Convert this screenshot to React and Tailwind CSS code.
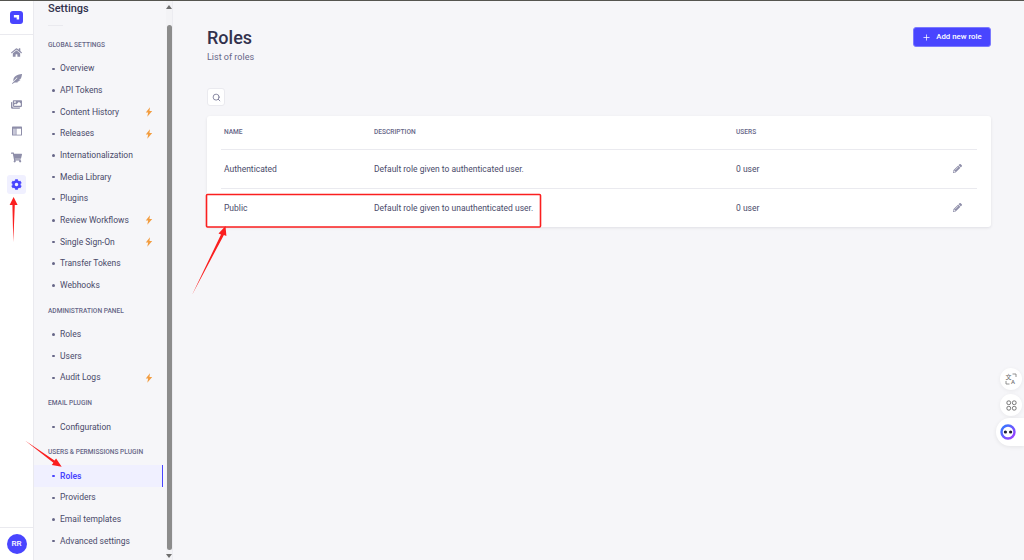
import { FaHome, FaFeatherAlt, FaImages, FaShoppingCart, FaCog, FaPencilAlt } from "react-icons/fa";
import { Plus, Search } from "lucide-react";

const sections = [
  {
    title: "GLOBAL SETTINGS",
    items: [
      { label: "Overview" },
      { label: "API Tokens" },
      { label: "Content History", bolt: true },
      { label: "Releases", bolt: true },
      { label: "Internationalization" },
      { label: "Media Library" },
      { label: "Plugins" },
      { label: "Review Workflows", bolt: true },
      { label: "Single Sign-On", bolt: true },
      { label: "Transfer Tokens" },
      { label: "Webhooks" },
    ],
  },
  {
    title: "ADMINISTRATION PANEL",
    items: [{ label: "Roles" }, { label: "Users" }, { label: "Audit Logs", bolt: true }],
  },
  { title: "EMAIL PLUGIN", items: [{ label: "Configuration" }] },
  {
    title: "USERS & PERMISSIONS PLUGIN",
    items: [
      { label: "Roles", active: true },
      { label: "Providers" },
      { label: "Email templates" },
      { label: "Advanced settings" },
    ],
  },
];

const roles = [
  { name: "Authenticated", description: "Default role given to authenticated user." },
  { name: "Public", description: "Default role given to unauthenticated user." },
];

function Bolt() {
  return (
    <svg viewBox="0 0 10 12" className="w-[8px] h-[10px]" fill="#f29d41">
      <path d="M6.2 0 1 6.6h2.9L2.9 12 9 4.9H5.6z" />
    </svg>
  );
}

function LayoutIcon() {
  return (
    <svg viewBox="0 0 12 12" className="w-[10px] h-[10px]">
      <rect x="0" y="0.5" width="12" height="11" rx="0.8" fill="#8e8ea9" />
      <rect x="1.2" y="3.2" width="3.4" height="7.2" fill="#c8c8d8" />
      <rect x="5.4" y="3.2" width="5.4" height="7.2" fill="#ffffff" />
    </svg>
  );
}

function NavRail() {
  const iconClass = "text-[#8e8ea9]";
  return (
    <div className="w-[34px] shrink-0 bg-white border-r border-[#eaeaef] flex flex-col items-center">
      <div className="h-[34px] w-full flex items-center justify-center border-b border-[#eaeaef] shrink-0">
        <div className="w-[13px] h-[13px] rounded-[3px] bg-[#4945ff] flex items-center justify-center">
          <svg viewBox="0 0 8 8" className="w-[7px] h-[7px]" fill="#ffffff">
            <path d="M1 1.2h6v5H4.2V4H1z" />
          </svg>
        </div>
      </div>
      <div className="flex flex-col items-center mt-[4px] w-full">
        <div className="h-[26.4px] flex items-center"><FaHome size={11} className={iconClass} /></div>
        <div className="h-[26.4px] flex items-center"><FaFeatherAlt size={10} className={iconClass} /></div>
        <div className="h-[26.4px] flex items-center"><FaImages size={11} className={iconClass} /></div>
        <div className="h-[26.4px] flex items-center"><LayoutIcon /></div>
        <div className="h-[26.4px] flex items-center"><FaShoppingCart size={11} className={iconClass} /></div>
        <div className="w-[19px] h-[19px] mt-[4px] rounded-[3px] bg-[#f0f0ff] flex items-center justify-center">
          <FaCog size={11} className="text-[#4945ff]" />
        </div>
      </div>
      <div className="mt-auto w-full border-t border-[#eaeaef] h-[33px] flex items-center justify-center shrink-0">
        <div className="w-[20px] h-[20px] rounded-full bg-[#4945ff] text-white text-[8px] font-medium flex items-center justify-center">
          RR
        </div>
      </div>
    </div>
  );
}

function SettingsNav() {
  return (
    <div className="w-[132px] shrink-0 h-full overflow-hidden">
      <h2 className="text-[11px] leading-[16px] font-medium text-[#32324d] ml-[14px] mb-[8px]">Settings</h2>
      <div className="w-[15px] h-px bg-[#eaeaef] ml-[14px] mb-[12px]" />
      {sections.map((section) => (
        <div key={section.title} className="mb-[7.5px]">
          <div className="h-[14px] ml-[14px] mb-[6px] text-[6.6px] leading-[14px] font-medium text-[#666687] whitespace-nowrap">
            {section.title}
          </div>
          {section.items.map((item, index) => (
            <div
              key={index}
              className={`h-[21.67px] flex items-center pl-[18px] pr-[10px] mr-[3px] ${
                item.active ? "bg-[#f0f0ff] border-r border-[#4945ff] text-[#4945ff] font-semibold" : "text-[#4a4a6a]"
              }`}
            >
              <span className={`w-[2.5px] h-[2.5px] rounded-full mr-[5.5px] ${item.active ? "bg-[#4945ff]" : "bg-[#666687]"}`} />
              <span className="text-[8.5px] whitespace-nowrap flex-1">{item.label}</span>
              {item.bolt && <Bolt />}
            </div>
          ))}
        </div>
      ))}
    </div>
  );
}

function Scrollbar() {
  return (
    <div className="w-[7px] shrink-0 h-full flex flex-col items-center bg-[#f3f3f6] border-r border-[#ececf1]">
      <div className="w-0 h-0 mt-[4px] border-x-[3px] border-x-transparent border-b-[4px] border-b-[#6e6e6e]" />
      <div className="w-[5px] flex-1 mt-[16px] mb-[4px] rounded-full bg-[#8c8c8c]" />
      <div className="w-0 h-0 mb-[2px] border-x-[3px] border-x-transparent border-t-[4px] border-t-[#6e6e6e]" />
    </div>
  );
}

function RolesTable() {
  return (
    <div className="bg-white rounded-[3px] shadow-[0_1px_3px_rgba(33,33,52,0.1)] px-[14px]">
      <div className="grid grid-cols-[150px_362px_1fr_24px] items-center h-[34px] border-b border-[#eaeaef] pl-[3px] text-[6.6px] font-medium text-[#666687]">
        <span>NAME</span>
        <span>DESCRIPTION</span>
        <span>USERS</span>
        <span />
      </div>
      {roles.map((role, index) => (
        <div
          key={role.name}
          className={`grid grid-cols-[150px_362px_1fr_24px] items-center h-[38.5px] pl-[3px] pt-[2px] text-[8.5px] text-[#4a4a6a] ${
            index === 0 ? "border-b border-[#eaeaef]" : ""
          }`}
        >
          <span>{role.name}</span>
          <span>{role.description}</span>
          <span>0 user</span>
          <FaPencilAlt size={9} className="text-[#8e8ea9] -mt-[3px]" />
        </div>
      ))}
    </div>
  );
}

function Annotations() {
  return (
    <svg className="absolute inset-0 pointer-events-none" width="1024" height="560" viewBox="0 0 1024 560">
      <rect x="206.5" y="193.5" width="334" height="32.5" rx="1" fill="none" stroke="#fb1f1f" strokeWidth="1.6" />
      <path d="M13.3 241 12.4 204H9.6l4-8 4 8h-2.8z" fill="#fb1f1f" />
      <path d="M25 439.5 54.5 459.6l1.6-2.2 5.6 8.3-9.9-1.7 1.6-2.2z" fill="#fb1f1f" />
      <path d="M192 294 221 233.5l-2.5-1.1L225.5 225l.9 10-2.5-1.1z" fill="#fb1f1f" />
    </svg>
  );
}

function FloatingButtons() {
  return (
    <div className="absolute right-0 top-[367px] flex flex-col items-end gap-[4px]">
      <div className="relative w-[22px] h-[22px] mr-[2px] rounded-full bg-white shadow-[0_1px_4px_rgba(0,0,0,0.06)] flex items-center justify-center">
        <span className="text-[6px] leading-[5.5px] font-medium text-[#777777] w-[11px]">
          文<br />
          <span className="pl-[5.5px]">A</span>
        </span>
        <svg viewBox="0 0 12 12" className="absolute left-[5px] top-[5px] w-[12px] h-[12px]" fill="none" stroke="#777777" strokeWidth="0.8">
          <path d="M7.5 1H11v3M1 8v3h3.5" />
        </svg>
      </div>
      <div className="w-[22px] h-[22px] mr-[2px] rounded-full bg-white shadow-[0_1px_4px_rgba(0,0,0,0.06)] flex items-center justify-center">
        <svg viewBox="0 0 12 12" className="w-[11px] h-[11px]" fill="none" stroke="#666666" strokeWidth="1">
          <rect x="1" y="1" width="4" height="4" rx="1.6" />
          <rect x="7" y="1" width="4" height="4" rx="1.6" />
          <rect x="1" y="7" width="4" height="4" rx="1.6" />
          <rect x="7" y="7" width="4" height="4" rx="1.6" />
        </svg>
      </div>
      <div className="w-[28px] h-[28px] -mt-[2px] rounded-l-full bg-white shadow-[0_1px_4px_rgba(0,0,0,0.08)] flex items-center pl-[4px]">
        <svg viewBox="0 0 16 16" className="w-[16px] h-[16px]">
          <defs>
            <linearGradient id="ring" x1="0" y1="0" x2="1" y2="1">
              <stop offset="0" stopColor="#2f7bff" />
              <stop offset="1" stopColor="#a23bff" />
            </linearGradient>
          </defs>
          <circle cx="8" cy="8" r="6.5" fill="#ffffff" stroke="url(#ring)" strokeWidth="2.4" />
          <circle cx="5.4" cy="8" r="1.6" fill="#1f1f33" />
          <circle cx="10.6" cy="8" r="1.6" fill="#1f1f33" />
        </svg>
      </div>
    </div>
  );
}

export default function App() {
  return (
    <div
      className="relative w-[1024px] h-[560px] overflow-hidden bg-[#f6f6f9] border-t border-[#555550] flex"
      style={{ fontFamily: 'Roboto, "Noto Sans CJK SC", sans-serif' }}
    >
      <NavRail />
      <SettingsNav />
      <Scrollbar />
      <main className="flex-1 min-w-0 pl-[34px] pr-[33px]">
        <div className="flex justify-between items-start">
          <div className="pt-[24px]">
            <h1 className="text-[18px] leading-[26px] font-medium text-[#32324d]">Roles</h1>
            <p className="text-[9px] leading-[12px] text-[#666687]">List of roles</p>
          </div>
          <button className="mt-[26px] w-[78px] h-[20px] rounded-[3px] bg-[#4945ff] border border-[#7b79ff] text-white text-[7.8px] font-medium flex items-center justify-center gap-[5px]">
            <Plus size={9} />
            Add new role
          </button>
        </div>
        <div className="w-[18px] h-[18px] mt-[25px] mb-[10px] rounded-[3px] bg-white border border-[#eaeaef] flex items-center justify-center">
          <Search size={9} className="text-[#666687]" />
        </div>
        <RolesTable />
      </main>
      <Annotations />
      <FloatingButtons />
    </div>
  );
}
